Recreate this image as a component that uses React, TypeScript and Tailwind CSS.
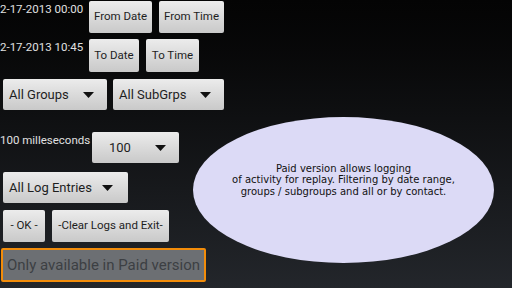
import React from "react";

function Btn({ label, className = "" }: { label: string; className?: string }) {
  return (
    <div
      className={`flex items-center justify-center rounded-[2px] bg-gradient-to-b from-[#ececec] to-[#c9c9c9] text-[11.5px] text-[#1e1e1e] ${className}`}
    >
      {label}
    </div>
  );
}

function Spinner({ label, className = "" }: { label: string; className?: string }) {
  return (
    <div
      className={`flex items-center justify-between rounded-[2px] bg-gradient-to-b from-[#ececec] to-[#c9c9c9] pl-[6px] pr-[13px] text-[13px] text-[#1e1e1e] ${className}`}
    >
      <span>{label}</span>
      <svg width="11" height="6" viewBox="0 0 11 6">
        <path d="M0 0 L11 0 L5.5 6 Z" fill="#111" />
      </svg>
    </div>
  );
}

export default function App() {
  return (
    <div
      className="relative h-[288px] w-[512px] overflow-hidden bg-gradient-to-b from-[#040404] to-[#23262b] text-[#e0e0e0]"
      style={{ fontFamily: "Roboto, 'Liberation Sans', sans-serif" }}
    >
      <div className="flex flex-col">
        <div className="flex h-[38px] items-start pt-[1px]">
          <span className="mt-[1px] w-[89px] text-[11.5px] leading-[14px]">2-17-2013 00:00</span>
          <Btn label="From Date" className="h-[32px] w-[63px]" />
          <Btn label="From Time" className="ml-[7px] h-[32px] w-[65px]" />
        </div>
        <div className="flex h-[41px] items-start pt-[1px]">
          <span className="mt-[1px] w-[89px] text-[11.5px] leading-[14px]">2-17-2013 10:45</span>
          <Btn label="To Date" className="h-[33px] w-[50px]" />
          <Btn label="To Time" className="ml-[7px] h-[33px] w-[53px]" />
        </div>
        <div className="flex h-[53px] items-start pl-[3px]">
          <Spinner label="All Groups" className="h-[31px] w-[104px]" />
          <Spinner label="All SubGrps" className="ml-[6px] h-[31px] w-[111px]" />
        </div>
        <div className="flex h-[40px] items-start">
          <span className="mt-[1px] w-[92px] text-[11.5px] leading-[14px]">100 milleseconds</span>
          <Spinner label="100" className="h-[31px] w-[87px] pl-[17px]" />
        </div>
        <div className="flex h-[38px] items-start pl-[3px]">
          <Spinner label="All Log Entries" className="h-[31px] w-[125px] pr-[15px]" />
        </div>
        <div className="flex h-[38px] items-start pl-[3px]">
          <Btn label="- OK -" className="h-[32px] w-[42px]" />
          <Btn label="-Clear Logs and Exit-" className="ml-[7px] h-[32px] w-[117px]" />
        </div>
        <div className="pl-[1px]">
          <div className="flex h-[34px] w-[205px] items-center justify-center rounded-[2px] border-2 border-[#f28c0a] bg-[#6c6f73] text-[15px] text-[#3c3f43]">
            Only available in Paid version
          </div>
        </div>
      </div>

      <div
        className="absolute left-[193px] top-[117px] flex h-[146px] w-[301px] items-center justify-center rounded-[50%] bg-[#dcdaf6] pb-[20px] text-center text-[10px] leading-[11.5px] text-[#111]"
        style={{ fontFamily: "'DejaVu Sans', Verdana, sans-serif" }}
      >
        <p>
          Paid version allows logging
          <br />
          of activity for replay. Filtering by date range,
          <br />
          groups / subgroups and all or by contact.
        </p>
      </div>
    </div>
  );
}
